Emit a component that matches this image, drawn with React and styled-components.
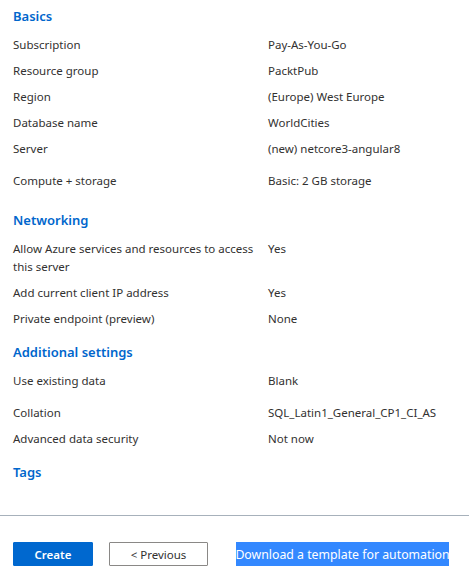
import React from "react";
import styled, { createGlobalStyle } from "styled-components";

const GlobalStyle = createGlobalStyle`
  html, body { margin: 0; padding: 0; background: #ffffff; }
  body {
    font-family: "Noto Sans", "Open Sans", sans-serif;
    font-size: 11.5px;
    color: #323130;
  }
`;

const Page = styled.div`
  width: 469px;
  height: 576px;
  display: flex;
  flex-direction: column;
  box-sizing: border-box;
`;

const Content = styled.main`
  display: flex;
  flex-direction: column;
  gap: 14px;
  padding: 6px 13px 0 13px;
  flex: 1;
`;

const Section = styled.section`
  display: flex;
  flex-direction: column;
`;

const Heading = styled.h2`
  margin: 0 0 10px 0;
  font-size: 13px;
  font-weight: 600;
  line-height: 20px;
  color: #0066cc;
`;

const Rows = styled.dl`
  margin: 0;
  display: flex;
  flex-direction: column;
  gap: 8px;
`;

const Row = styled.div`
  display: grid;
  grid-template-columns: 255px 1fr;
  line-height: 18px;
  padding-top: ${(p) => p.$padTop || 0}px;
  padding-bottom: ${(p) => p.$padBottom || 0}px;
`;

const Label = styled.dt`
  margin: 0;
  padding-right: 6px;
`;

const Value = styled.dd`
  margin: 0;
  white-space: nowrap;
`;

const Footer = styled.footer`
  border-top: 1px solid #a7b1bb;
  padding: 26px 13px 10px 13px;
  display: flex;
  align-items: center;
  gap: 16px;
`;

const PrimaryButton = styled.button`
  width: 80px;
  height: 24px;
  background: #0068cf;
  border: 1px solid #0068cf;
  border-radius: 1px;
  color: #ffffff;
  font-family: inherit;
  font-size: 11.5px;
  font-weight: 600;
  padding: 0;
`;

const SecondaryButton = styled.button`
  width: 99px;
  height: 24px;
  background: #ffffff;
  border: 1px solid #8a8886;
  border-radius: 1px;
  color: #323130;
  font-family: inherit;
  font-size: 11.5px;
  padding: 0;
`;

const LinkButton = styled.a`
  margin-left: 12px;
  width: 213px;
  height: 24px;
  display: flex;
  align-items: center;
  justify-content: center;
  background: #3388ff;
  color: #ffffff;
  font-size: 12.3px;
  white-space: nowrap;
  text-decoration: none;
`;

const sections = [
  {
    title: "Basics",
    rows: [
      ["Subscription", "Pay-As-You-Go"],
      ["Resource group", "PacktPub"],
      ["Region", "(Europe) West Europe"],
      ["Database name", "WorldCities"],
      ["Server", "(new) netcore3-angular8"],
      ["Compute + storage", "Basic: 2 GB storage", 6, 6],
    ],
  },
  {
    title: "Networking",
    rows: [
      ["Allow Azure services and resources to access this server", "Yes"],
      ["Add current client IP address", "Yes"],
      ["Private endpoint (preview)", "None"],
    ],
  },
  {
    title: "Additional settings",
    rows: [
      ["Use existing data", "Blank", 0, 6],
      ["Collation", "SQL_Latin1_General_CP1_CI_AS"],
      ["Advanced data security", "Not now"],
    ],
  },
  { title: "Tags", rows: [] },
];

export default function App() {
  return (
    <Page>
      <GlobalStyle />
      <Content>
        {sections.map((s) => (
          <Section key={s.title}>
            <Heading>{s.title}</Heading>
            {s.rows.length > 0 && (
              <Rows>
                {s.rows.map(([label, value, pt, pb]) => (
                  <Row key={label} $padTop={pt} $padBottom={pb}>
                    <Label>{label}</Label>
                    <Value>{value}</Value>
                  </Row>
                ))}
              </Rows>
            )}
          </Section>
        ))}
      </Content>
      <Footer>
        <PrimaryButton>Create</PrimaryButton>
        <SecondaryButton>&lt; Previous</SecondaryButton>
        <LinkButton href="#">Download a template for automation</LinkButton>
      </Footer>
    </Page>
  );
}
